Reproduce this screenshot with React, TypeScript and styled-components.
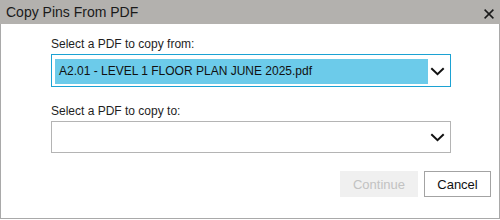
import React from 'react';
import styled, { createGlobalStyle } from 'styled-components';

const GlobalStyle = createGlobalStyle`
  html, body {
    margin: 0;
    padding: 0;
    background: #ffffff;
    font-family: 'Liberation Sans', Arial, sans-serif;
  }
  * { box-sizing: border-box; }
`;

const Dialog = styled.div`
  width: 500px;
  display: flex;
  flex-direction: column;
`;

const TitleBar = styled.div`
  height: 24px;
  background: #b3b1ae;
  display: flex;
  align-items: center;
  justify-content: space-between;
  padding: 0 6px 0 6px;
`;

const Title = styled.div`
  font-size: 14px;
  line-height: 24px;
  color: #1a1a1a;
`;

const CloseButton = styled.button`
  width: 11px;
  height: 11px;
  padding: 0;
  border: 0;
  background: transparent;
  display: flex;
  align-items: center;
  justify-content: center;
  cursor: pointer;
  margin-top: 3px;
`;

const Body = styled.div`
  height: 195px;
  border: 1px solid #a9a9a9;
  border-top: 0;
  padding: 13px 8px 0 50px;
  display: flex;
  flex-direction: column;
`;

const Field = styled.div`
  width: 400px;
  display: flex;
  flex-direction: column;
  gap: 3px;
  & + & { margin-top: 17px; }
`;

const Label = styled.label`
  font-size: 12px;
  line-height: 14px;
  color: #1e1e1e;
`;

const SelectBox = styled.div<{ $focused?: boolean }>`
  height: ${p => (p.$focused ? 33 : 32)}px;
  border: 1px solid ${p => (p.$focused ? '#1ca2d3' : '#b4b4b4')};
  background: #ffffff;
  display: flex;
  align-items: stretch;
  padding: ${p => (p.$focused ? '4px 0 2px 3px' : '3px 0 3px 3px')};
  cursor: pointer;
`;

const Value = styled.div<{ $selected?: boolean }>`
  flex: 1;
  background: ${p => (p.$selected ? '#6ccbea' : 'transparent')};
  font-size: 12px;
  line-height: 24px;
  color: #111111;
  padding-left: 4px;
  white-space: nowrap;
  overflow: hidden;
`;

const Arrow = styled.div`
  width: 22px;
  display: flex;
  align-items: center;
  justify-content: flex-start;
  padding-left: 2px;
`;

const Actions = styled.div`
  display: flex;
  justify-content: flex-end;
  gap: 6px;
  margin-top: 18px;
`;

const Button = styled.button<{ $width: number }>`
  width: ${p => p.$width}px;
  height: 26px;
  font-family: 'Liberation Sans', Arial, sans-serif;
  font-size: 13px;
  padding: 0;
  background: #ffffff;
  border: 1px solid #a3a3a3;
  color: #111111;
  cursor: pointer;
  &:disabled {
    background: #f0f0f0;
    border-color: #f0f0f0;
    color: #c2c2c2;
    cursor: default;
  }
`;

function Chevron() {
  return (
    <svg width="15" height="9" viewBox="0 0 15 9">
      <polyline points="1.3,1.3 7.5,7.2 13.7,1.3" fill="none" stroke="#111" strokeWidth="2" />
    </svg>
  );
}

export default function App() {
  return (
    <>
      <GlobalStyle />
      <Dialog>
        <TitleBar>
          <Title>Copy Pins From PDF</Title>
          <CloseButton aria-label="Close">
            <svg width="10" height="10" viewBox="0 0 10 10">
              <path d="M0.6 0.6 L9.4 9.4 M9.4 0.6 L0.6 9.4" stroke="#1a1a1a" strokeWidth="1.5" />
            </svg>
          </CloseButton>
        </TitleBar>
        <Body>
          <Field>
            <Label>Select a PDF to copy from:</Label>
            <SelectBox $focused>
              <Value $selected>A2.01 - LEVEL 1 FLOOR PLAN JUNE 2025.pdf</Value>
              <Arrow><Chevron /></Arrow>
            </SelectBox>
          </Field>
          <Field>
            <Label>Select a PDF to copy to:</Label>
            <SelectBox>
              <Value />
              <Arrow><Chevron /></Arrow>
            </SelectBox>
          </Field>
          <Actions>
            <Button $width={78} disabled>Continue</Button>
            <Button $width={67}>Cancel</Button>
          </Actions>
        </Body>
      </Dialog>
    </>
  );
}
